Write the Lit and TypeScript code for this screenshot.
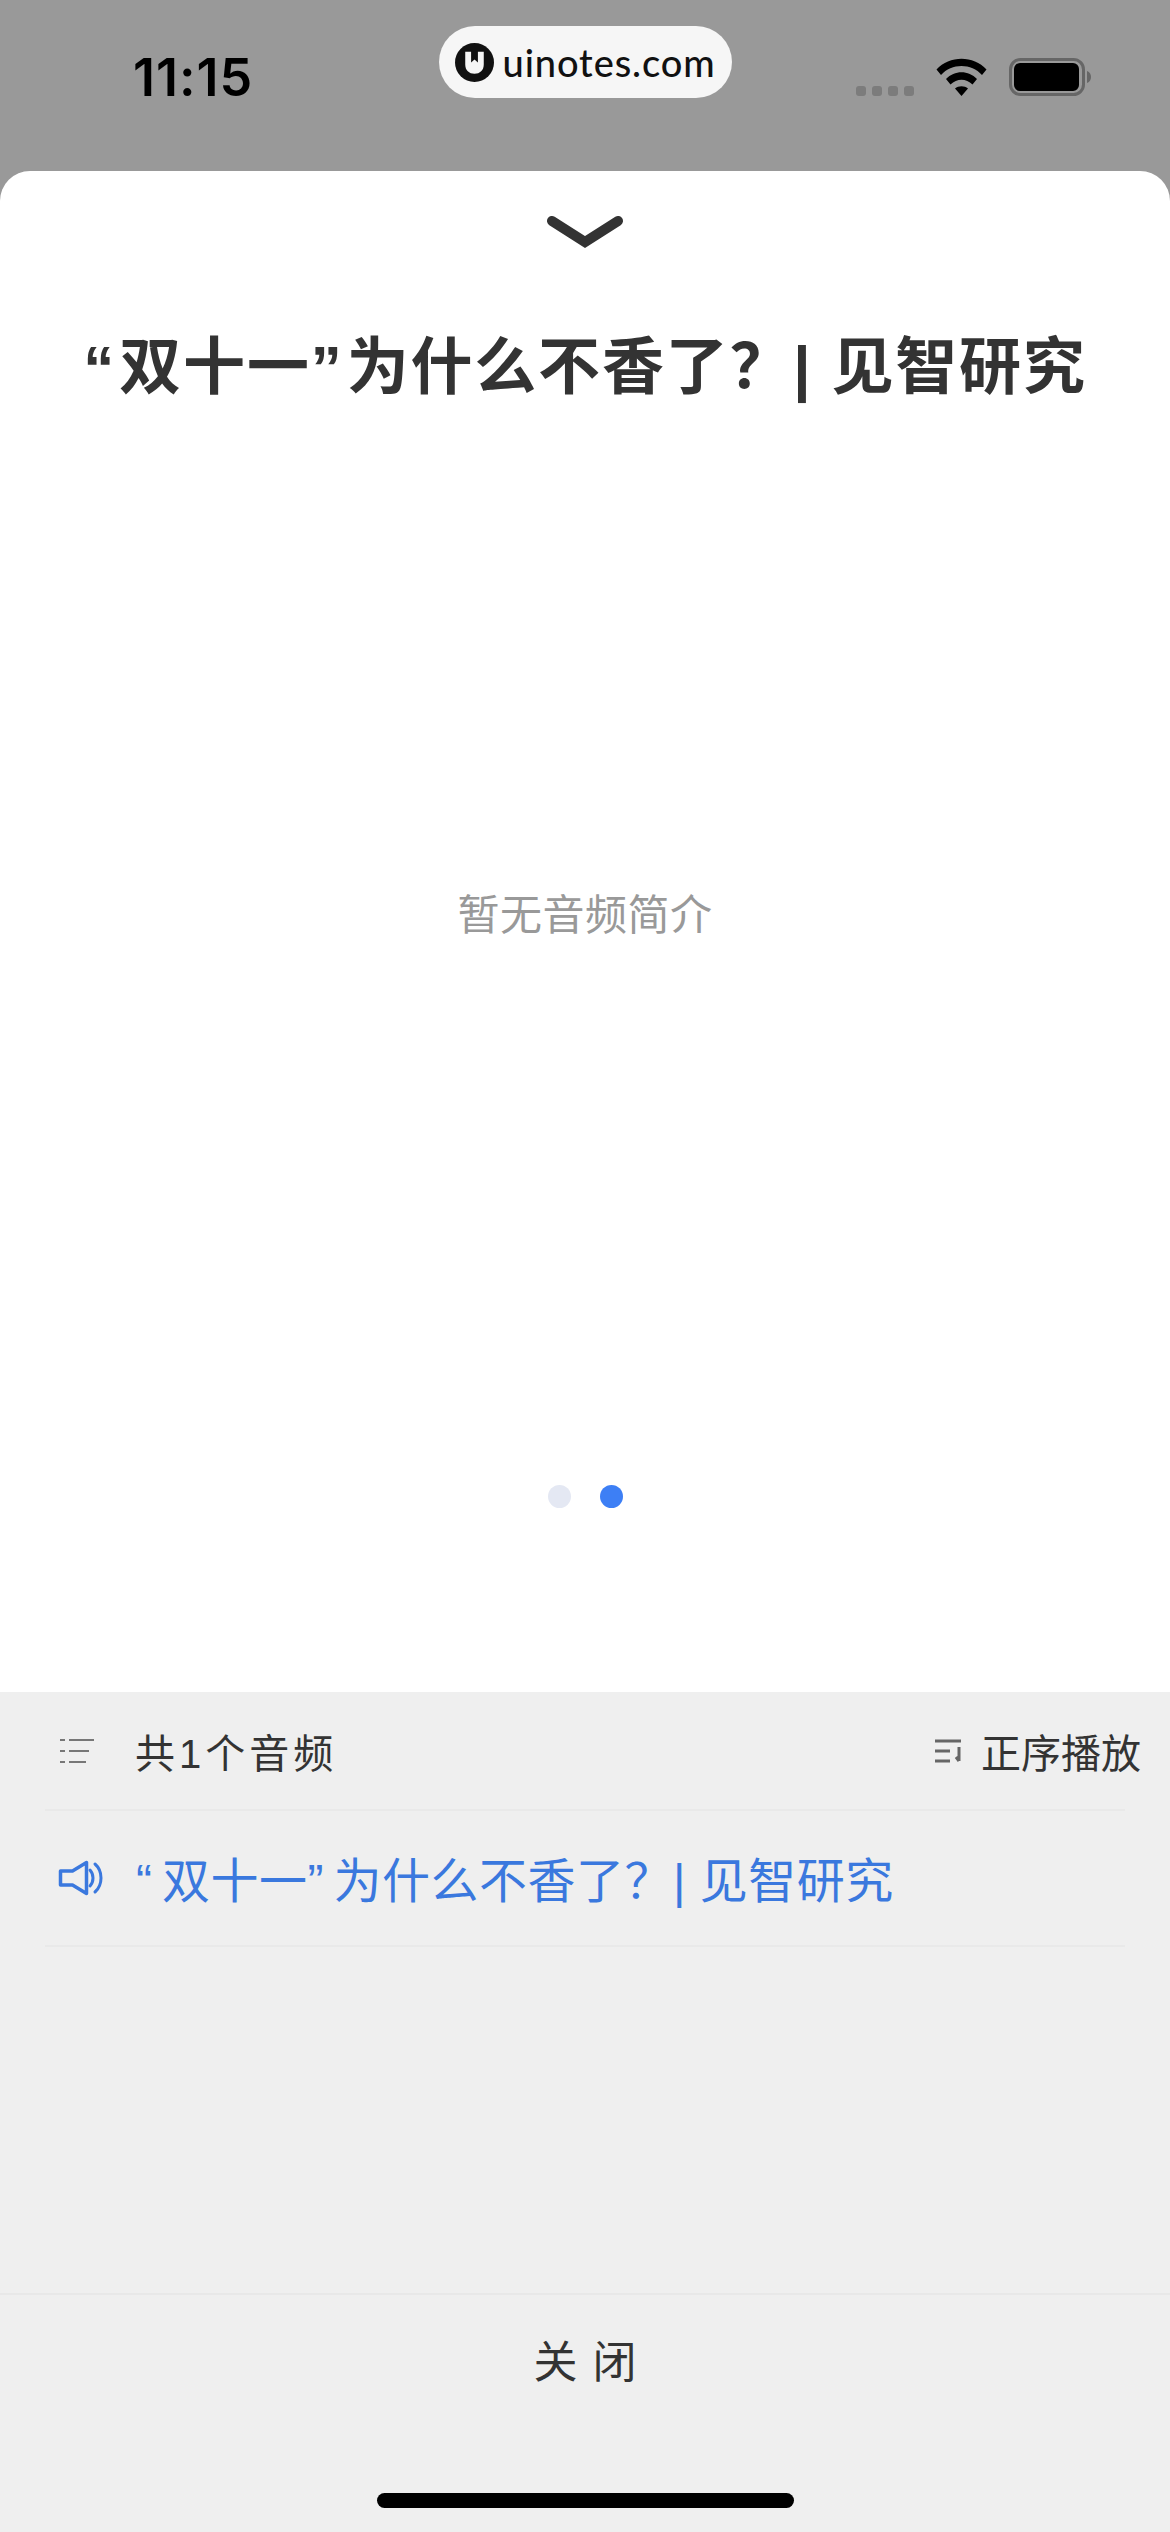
import { LitElement, html, css } from "lit";
import { customElement } from "lit/decorators.js";

@customElement("app-root")
export class AppRoot extends LitElement {
  static styles = css`
    :host {
      display: flex;
      flex-direction: column;
      width: 1170px;
      height: 2532px;
      background: #999999;
      font-family: "Liberation Sans", "Noto Sans CJK SC", "Noto Sans", sans-serif;
      overflow: hidden;
    }
    .status {
      height: 171px;
      flex: none;
      display: grid;
      grid-template-columns: 1fr 293px 1fr;
      align-items: start;
    }
    .time {
      margin: 50px 0 0 133px;
      font: 600 52px/56px Inter, "Liberation Sans", sans-serif;
      letter-spacing: 1px;
      color: #000;
    }
    .pill {
      margin-top: 26px;
      height: 72px;
      border-radius: 36px;
      background: #f6f6f6;
      display: flex;
      align-items: center;
      padding-left: 16px;
      gap: 9px;
      color: #111;
      font: 500 38px/72px Lato, "Noto Sans", sans-serif;
      letter-spacing: 0.9px;
    }
    .sys {
      display: flex;
      align-items: flex-start;
      margin: 58px 0 0 124.5px;
    }
    .sig {
      display: flex;
      gap: 6px;
      margin: 28px 0 0 0;
    }
    .sig i {
      width: 10px;
      height: 10px;
      border-radius: 3px;
      background: #7c7c7c;
    }
    .wifi { margin: 0 0 0 22px; }
    .batt { margin: 0 0 0 22px; }
    .sheet {
      flex: none;
      height: 1521px;
      display: flex;
      flex-direction: column;
      align-items: center;
      background: #fff;
      border-radius: 30px 30px 0 0;
    }
    .chev { margin-top: 44px; flex: none; }
    h1 {
      margin: 84px 0 0;
      font-size: 62px;
      line-height: 70px;
      font-weight: 700;
      letter-spacing: 1.8px;
      color: #333;
      white-space: nowrap;
    }
    h1 .q { letter-spacing: 5px; }
    .empty {
      margin-top: 483px;
      font-size: 42px;
      line-height: 60px;
      letter-spacing: 0.5px;
      color: #999;
    }
    .dots {
      margin-top: 539px;
      display: flex;
      gap: 29px;
    }
    .dots i {
      width: 23px;
      height: 23px;
      border-radius: 50%;
      background: #e4e8f3;
    }
    .dots i.on { background: #3d7ff5; }
    .panel {
      flex: 1;
      background: #efefef;
      display: flex;
      flex-direction: column;
    }
    .list {
      flex: none;
      height: 601px;
      padding-left: 45px;
      border-bottom: 2px solid #e8e8e8;
    }
    .head {
      height: 119px;
      display: flex;
      align-items: center;
      font-size: 40px;
      color: #333;
      box-sizing: border-box;
      margin-right: 45px;
      border-bottom: 2px solid #e9e9e9;
    }
    .list-icon { margin-left: 15px; flex: none; }
    .head .count { margin-left: 41px; flex: 1; letter-spacing: 4px; }
    .head .order {
      display: flex;
      align-items: center;
      gap: 16px;
      margin-right: -16px;
    }
    .track {
      height: 134px;
      display: flex;
      align-items: center;
      margin-right: 45px;
      border-bottom: 2px solid #e9e9e9;
      color: #3a78de;
      font-size: 48px;
    }
    .speaker { margin-left: 13px; flex: none; }
    .track-title { margin: 0 0 2px 32px; letter-spacing: 0.5px; }
    .track-title .q { letter-spacing: 10px; }
    .close {
      flex: 1;
      text-align: center;
      font-size: 44px;
      line-height: 60px;
      padding-top: 38px;
      color: #333;
      word-spacing: 3px;
    }
    .home {
      flex: none;
      align-self: center;
      width: 417px;
      height: 15px;
      border-radius: 8px;
      background: #000;
      margin-bottom: 24px;
    }
  `;

  render() {
    return html`
      <div class="status">
        <div class="time">11:15</div>
        <div class="pill">
          <svg width="39" height="39" viewBox="0 0 40 40">
            <circle cx="20" cy="20" r="20" fill="#111" />
            <path d="M10.500 9h6v11l3.500-3 3.500 3V9h6v13c0 6-4 9.500-9.500 9.500S10.500 28 10.500 22z" fill="#f6f6f6" />
          </svg>
          <span>uinotes.com</span>
        </div>
        <div class="sys">
          <div class="sig"><i></i><i></i><i></i><i></i></div>
          <svg class="wifi" width="51" height="38" viewBox="0 0 50 38">
            <path d="M0 11.500C13-3 37-3 50 11.500L45.500 17C35 5 15 5 4.500 17z" fill="#000" />
            <path d="M9.500 21C18 12 32 12 40.500 21L36 26.500C29.500 20 20.500 20 14 26.500z" fill="#000" />
            <path d="M18.500 30.500C22 27.500 28 27.500 31.500 30.500L25 38z" fill="#000" />
          </svg>
          <svg class="batt" width="82" height="38" viewBox="0 0 82 38">
            <rect x="1.500" y="1.500" width="73" height="35" rx="10" fill="none" stroke="#666" stroke-width="3" />
            <rect x="5" y="5" width="65" height="28" rx="6" fill="#000" />
            <path d="M78 13c3 1 4 3.500 4 6s-1 5-4 6z" fill="#666" />
          </svg>
        </div>
      </div>
      <div class="sheet">
        <svg class="chev" width="78" height="34" viewBox="0 0 78 34">
          <path d="M6 6 39 27 72 6" fill="none" stroke="#333" stroke-width="10" stroke-linecap="round" />
        </svg>
        <h1><span class="q">“</span>双十一<span class="q">”</span>为什么不香了？| 见智研究</h1>
        <div class="empty">暂无音频简介</div>
        <div class="dots"><i></i><i class="on"></i></div>
      </div>
      <div class="panel">
        <div class="list">
          <div class="head">
            <svg class="list-icon" width="34" height="26" viewBox="0 0 34 26">
              <path d="M0 2h5M9 2h25M0 13h5M9 13h20M0 24h5M9 24h17" stroke="#777" stroke-width="2" fill="none" />
            </svg>
            <span class="count">共1个音频</span>
            <span class="order">
              <svg width="30" height="24" viewBox="0 0 30 24">
                <path d="M0 2h26M0 12h15M0 22h15M24 8v14M21 18l3 4" stroke="#666" stroke-width="3" fill="none" />
              </svg>
              正序播放
            </span>
          </div>
          <div class="track">
            <svg class="speaker" width="46" height="36" viewBox="0 0 46 36">
              <path d="M2.500 11h12L28.500 2.500v31L14.500 25H2.500z" fill="none" stroke="#3a78de" stroke-width="3.500" stroke-linejoin="round" />
              <path d="M32 10c4 4.500 4 11.500 0 16M37 4c8 7 8 21 0 28" fill="none" stroke="#3a78de" stroke-width="3" stroke-linecap="round" />
            </svg>
            <span class="track-title"><span class="q">“</span>双十一<span class="q">”</span>为什么不香了？| 见智研究</span>
          </div>
        </div>
        <div class="close">关 闭</div>
        <div class="home"></div>
      </div>
    `;
  }
}
